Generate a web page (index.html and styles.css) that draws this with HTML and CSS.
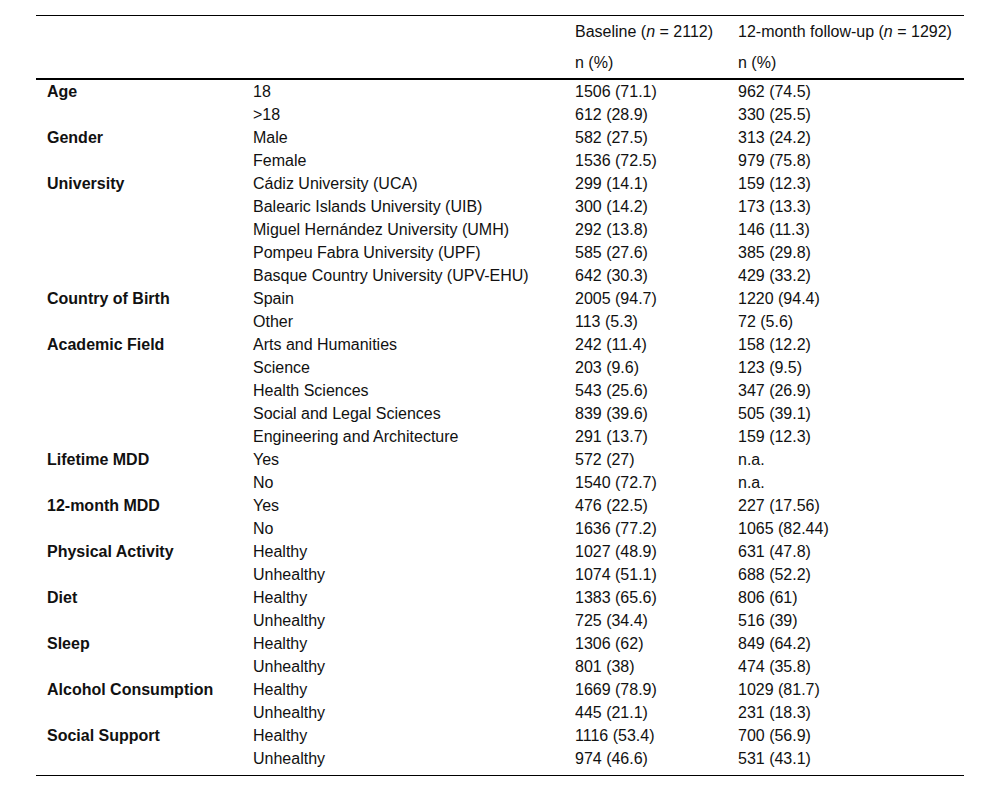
FILE: index.html
```html
<!DOCTYPE html>
<html>
<head>
<meta charset="utf-8">
<link rel="stylesheet" href="styles.css">
</head>
<body>
<table class="data">
  <colgroup>
    <col class="c1"><col class="c2"><col class="c3"><col class="c4">
  </colgroup>
  <thead>
    <tr class="h1"><th></th><th></th><th>Baseline (<i>n</i> = 2112)</th><th>12-month follow-up (<i>n</i> = 1292)</th></tr>
    <tr class="h2"><th></th><th></th><th>n (%)</th><th>n (%)</th></tr>
  </thead>
  <tbody>
    <tr><td class="var">Age</td><td>18</td><td>1506 (71.1)</td><td>962 (74.5)</td></tr>
    <tr><td></td><td>&gt;18</td><td>612 (28.9)</td><td>330 (25.5)</td></tr>
    <tr><td class="var">Gender</td><td>Male</td><td>582 (27.5)</td><td>313 (24.2)</td></tr>
    <tr><td></td><td>Female</td><td>1536 (72.5)</td><td>979 (75.8)</td></tr>
    <tr><td class="var">University</td><td>Cádiz University (UCA)</td><td>299 (14.1)</td><td>159 (12.3)</td></tr>
    <tr><td></td><td>Balearic Islands University (UIB)</td><td>300 (14.2)</td><td>173 (13.3)</td></tr>
    <tr><td></td><td>Miguel Hernández University (UMH)</td><td>292 (13.8)</td><td>146 (11.3)</td></tr>
    <tr><td></td><td>Pompeu Fabra University (UPF)</td><td>585 (27.6)</td><td>385 (29.8)</td></tr>
    <tr><td></td><td>Basque Country University (UPV-EHU)</td><td>642 (30.3)</td><td>429 (33.2)</td></tr>
    <tr><td class="var">Country of Birth</td><td>Spain</td><td>2005 (94.7)</td><td>1220 (94.4)</td></tr>
    <tr><td></td><td>Other</td><td>113 (5.3)</td><td>72 (5.6)</td></tr>
    <tr><td class="var">Academic Field</td><td>Arts and Humanities</td><td>242 (11.4)</td><td>158 (12.2)</td></tr>
    <tr><td></td><td>Science</td><td>203 (9.6)</td><td>123 (9.5)</td></tr>
    <tr><td></td><td>Health Sciences</td><td>543 (25.6)</td><td>347 (26.9)</td></tr>
    <tr><td></td><td>Social and Legal Sciences</td><td>839 (39.6)</td><td>505 (39.1)</td></tr>
    <tr><td></td><td>Engineering and Architecture</td><td>291 (13.7)</td><td>159 (12.3)</td></tr>
    <tr><td class="var">Lifetime MDD</td><td>Yes</td><td>572 (27)</td><td>n.a.</td></tr>
    <tr><td></td><td>No</td><td>1540 (72.7)</td><td>n.a.</td></tr>
    <tr><td class="var">12-month MDD</td><td>Yes</td><td>476 (22.5)</td><td>227 (17.56)</td></tr>
    <tr><td></td><td>No</td><td>1636 (77.2)</td><td>1065 (82.44)</td></tr>
    <tr><td class="var">Physical Activity</td><td>Healthy</td><td>1027 (48.9)</td><td>631 (47.8)</td></tr>
    <tr><td></td><td>Unhealthy</td><td>1074 (51.1)</td><td>688 (52.2)</td></tr>
    <tr><td class="var">Diet</td><td>Healthy</td><td>1383 (65.6)</td><td>806 (61)</td></tr>
    <tr><td></td><td>Unhealthy</td><td>725 (34.4)</td><td>516 (39)</td></tr>
    <tr><td class="var">Sleep</td><td>Healthy</td><td>1306 (62)</td><td>849 (64.2)</td></tr>
    <tr><td></td><td>Unhealthy</td><td>801 (38)</td><td>474 (35.8)</td></tr>
    <tr><td class="var">Alcohol Consumption</td><td>Healthy</td><td>1669 (78.9)</td><td>1029 (81.7)</td></tr>
    <tr><td></td><td>Unhealthy</td><td>445 (21.1)</td><td>231 (18.3)</td></tr>
    <tr><td class="var">Social Support</td><td>Healthy</td><td>1116 (53.4)</td><td>700 (56.9)</td></tr>
    <tr class="last"><td></td><td>Unhealthy</td><td>974 (46.6)</td><td>531 (43.1)</td></tr>
  </tbody>
</table>
</body>
</html>
```
FILE: styles.css
```css
html, body {
  margin: 0;
  padding: 0;
  background: #fff;
}
body {
  padding: 15px 36px 0 36px;
  font-family: "Liberation Sans", Arial, sans-serif;
  font-size: 16px;
  color: #111;
}
.data {
  width: 928px;
  border-collapse: collapse;
  table-layout: fixed;
  border-top: 1px solid #000;
  border-bottom: 1px solid #000;
}
.c1 { width: 206px; }
.c2 { width: 322px; }
.c3 { width: 163px; }
.c4 { width: 237px; }
.data th, .data td {
  padding: 3px 11px;
  line-height: 17px;
  text-align: left;
  vertical-align: middle;
  white-space: nowrap;
}
.data th {
  font-weight: normal;
}
.data .h1 th { padding-top: 7px; padding-bottom: 7px; }
.data .h2 th { padding-top: 7px; padding-bottom: 7px; }
.data thead tr.h2 { border-bottom: 2px solid #000; }
.data td.var { font-weight: bold; }
.data tr.last td { padding-bottom: 8px; }
.data i { font-style: italic; }
```
